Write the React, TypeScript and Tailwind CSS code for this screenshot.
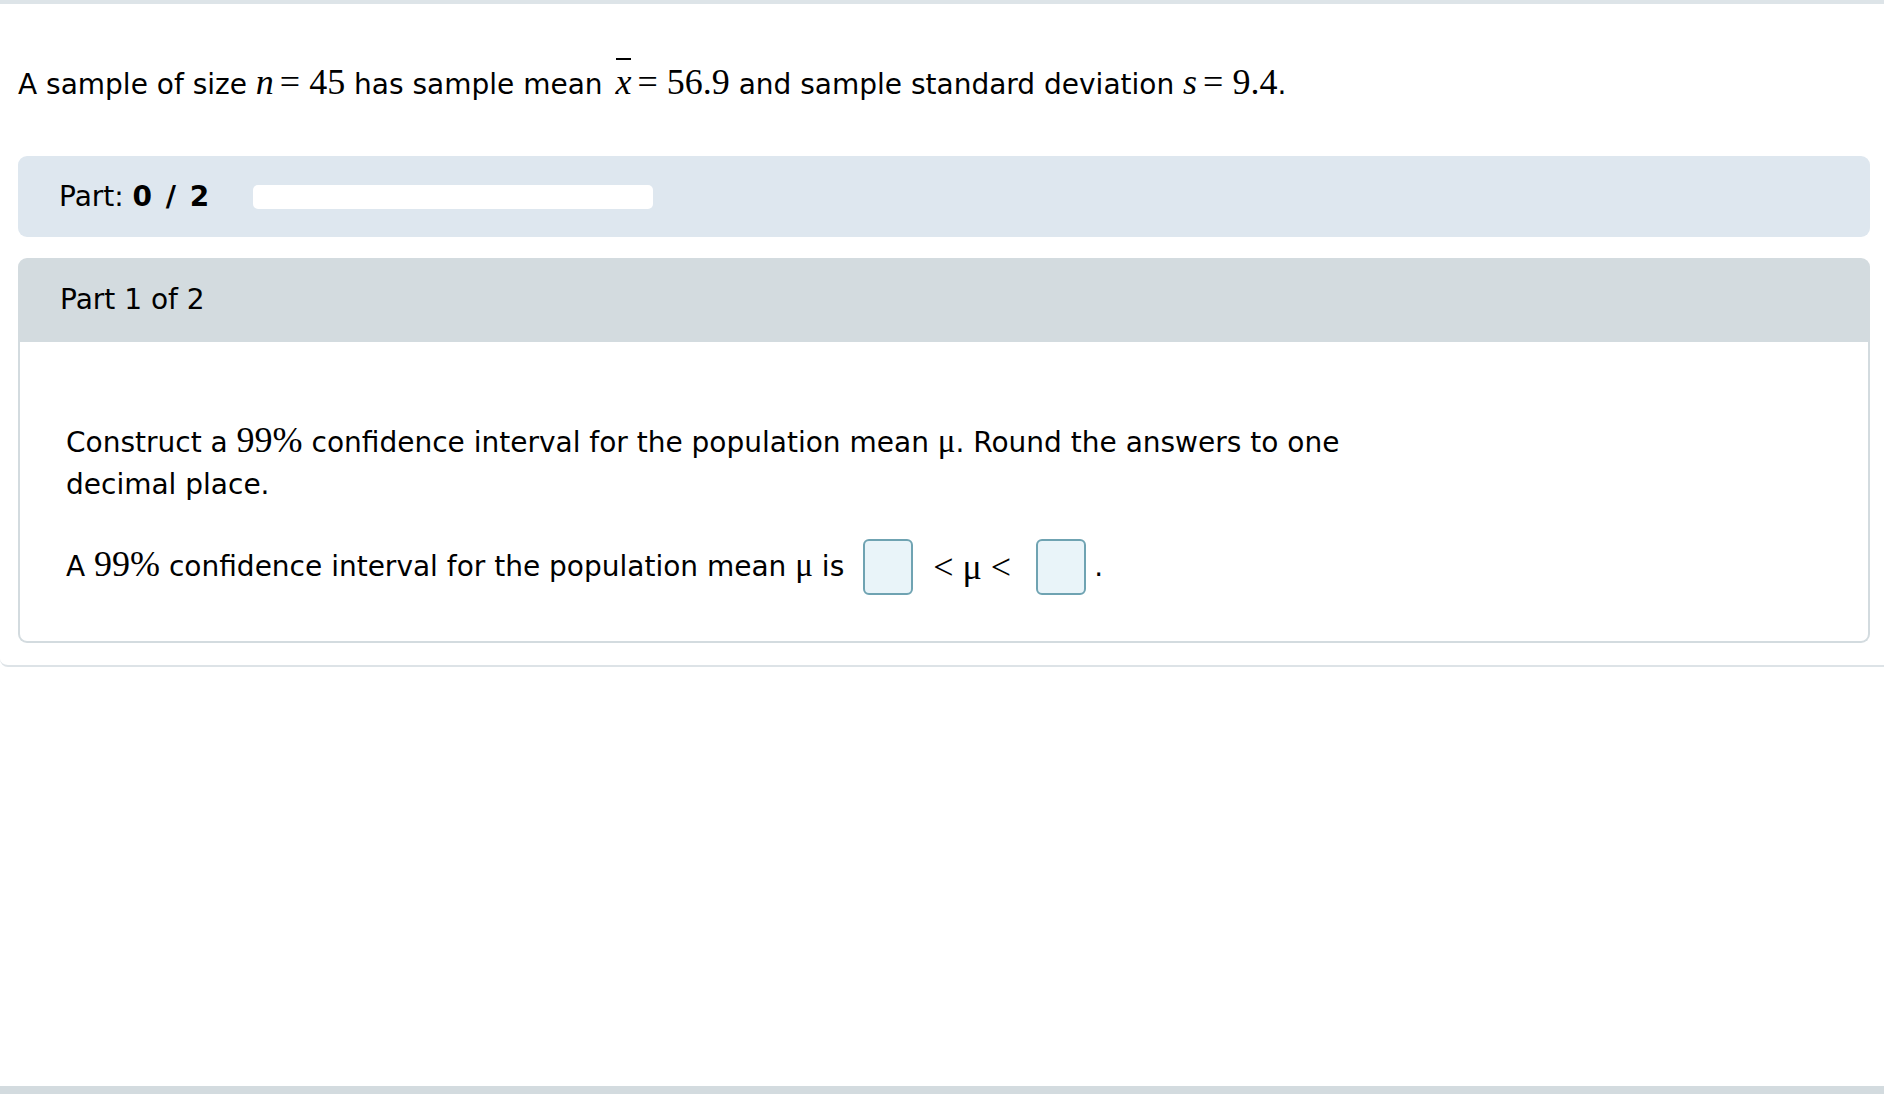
import React from "react";

const serif = "font-['Liberation_Serif',serif]";

const MathVar: React.FC<{ children: React.ReactNode }> = ({ children }) => (
  <span className={`${serif} italic text-[36px] leading-none`}>{children}</span>
);

const MathNum: React.FC<{ children: React.ReactNode }> = ({ children }) => (
  <span className={`${serif} text-[36px] leading-none`}>{children}</span>
);

const Eq: React.FC = () => (
  <span className={`${serif} text-[36px] leading-none ml-[6px] mr-[9px]`}>=</span>
);

const AnswerBox: React.FC = () => (
  <input
    type="text"
    aria-label="answer"
    className="w-[50px] h-[56px] rounded-[6px] border-2 border-[#6fa3b2] bg-[#e9f4f9] outline-none"
  />
);

const App: React.FC = () => {
  return (
    <div className="min-h-screen flex flex-col bg-white text-black font-['DejaVu_Sans','Verdana',sans-serif] text-[28px]">
      <div className="border-t-4 border-t-[#dde4e8] border-b-2 border-b-[#dde3e7] rounded-bl-[8px] pb-[22px]">
        <p className="pl-[18px] pt-[60px] h-[104px] leading-[40px] whitespace-nowrap">
          A sample of size <MathVar>n</MathVar>
          <Eq />
          <MathNum>45</MathNum> has sample mean{" "}
          <span className="relative inline-block leading-none ml-[4px]">
            <span className="absolute left-[1px] right-0 -top-[6px] h-[2px] bg-black" />
            <MathVar>x</MathVar>
          </span>
          <Eq />
          <MathNum>56.9</MathNum> and sample standard deviation <MathVar>s</MathVar>
          <Eq />
          <MathNum>9.4</MathNum>.
        </p>

        <div className="mt-[48px] ml-[18px] mr-[14px] h-[81px] rounded-[9px] bg-[#dee7ef] flex items-center pl-[41px]">
          <span>
            Part: <span className="font-bold tracking-[2px]">0 / 2</span>
          </span>
          <div className="ml-[42px] w-[400px] h-[24px] rounded-[5px] bg-white" />
        </div>

        <div className="mt-[21px] ml-[18px] mr-[14px]">
          <div className="h-[84px] rounded-t-[9px] bg-[#d3dbdf] flex items-center pl-[42px]">
            Part 1 of 2
          </div>
          <div className="h-[301px] border-2 border-t-0 border-[#d3dbdf] rounded-b-[9px] pl-[46px] pt-[80px]">
            <p className="leading-[42px] max-w-[1300px]">
              Construct a <MathNum>99%</MathNum> confidence interval for the population mean{" "}
              <span className={`${serif} text-[33px] leading-none`}>μ</span>. Round the answers to one decimal
              place.
            </p>
            <div className="mt-[33px] flex items-center">
              <span>
                A <MathNum>99%</MathNum> confidence interval for the population mean{" "}
                <span className={`${serif} text-[33px] leading-none`}>μ</span> is
              </span>
              <span className="ml-[19px] flex">
                <AnswerBox />
              </span>
              <span className={`${serif} text-[36px] leading-none ml-[20px] mr-[25px] flex gap-[9px]`}>
                <span>&lt;</span>
                <span>μ</span>
                <span>&lt;</span>
              </span>
              <AnswerBox />
              <span className="ml-[8px]">.</span>
            </div>
          </div>
        </div>
      </div>
      <div className="mt-auto h-[8px] bg-[#d3dbdf]" />
    </div>
  );
};

export default App;
